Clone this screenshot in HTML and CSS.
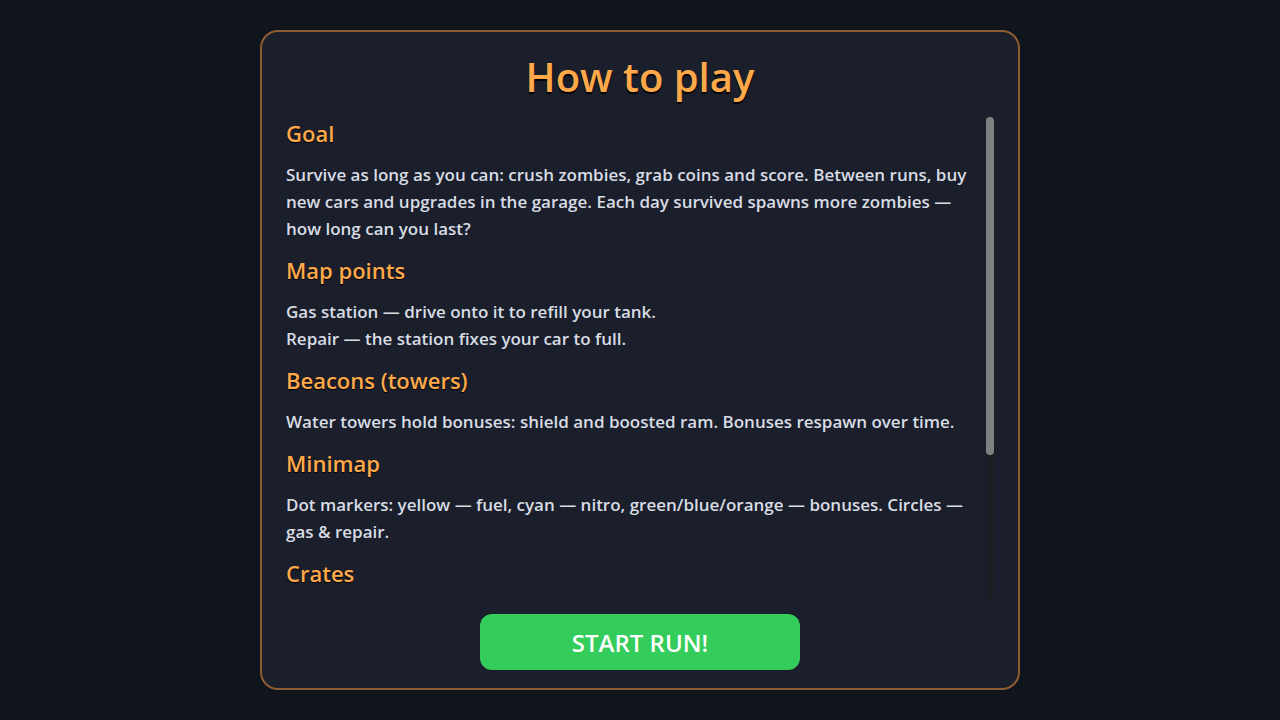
FILE: index.html
```html
<!DOCTYPE html>
<html lang="en">
<head>
<meta charset="utf-8">
<title>How to play</title>
<link rel="stylesheet" href="styles.css">
</head>
<body>
<div class="screen">
  <div class="panel">
    <h1 class="title">How to play</h1>
    <div class="body">
      <div class="scroll">
        <h2 class="heading">Goal</h2>
        <p class="text">Survive as long as you can: crush zombies, grab coins and score. Between runs, buy new cars and upgrades in the garage. Each day survived spawns more zombies — how long can you last?</p>
        <h2 class="heading">Map points</h2>
        <p class="text">Gas station — drive onto it to refill your tank.<br>Repair — the station fixes your car to full.</p>
        <h2 class="heading">Beacons (towers)</h2>
        <p class="text">Water towers hold bonuses: shield and boosted ram. Bonuses respawn over time.</p>
        <h2 class="heading">Minimap</h2>
        <p class="text">Dot markers: yellow — fuel, cyan — nitro, green/blue/orange — bonuses. Circles — gas &amp; repair.</p>
        <h2 class="heading">Crates</h2>
      </div>
      <div class="track"><div class="thumb"></div></div>
    </div>
    <div class="actions">
      <button class="start">START RUN!</button>
    </div>
  </div>
</div>
</body>
</html>
```
FILE: styles.css
```css
html, body {
  margin: 0;
  padding: 0;
  height: 100%;
  background: #10141c;
  font-family: "Open Sans", "Noto Sans", sans-serif;
}
.screen {
  height: 720px;
  display: flex;
  align-items: center;
  justify-content: center;
}
.panel {
  box-sizing: border-box;
  width: 760px;
  height: 660px;
  background: #1a1f2b;
  border: 2px solid #8a5c30;
  border-radius: 18px;
  padding: 18px 24px 18px 24px;
  display: flex;
  flex-direction: column;
}
.title {
  margin: 0 0 13px 0;
  text-align: center;
  font-size: 40px;
  font-weight: 600;
  line-height: 54px;
  color: #ffa94a;
  text-shadow: 0 2px 1px #000;
}
.body {
  flex: 1;
  min-height: 0;
  display: flex;
  gap: 12px;
}
.scroll {
  flex: 1;
  min-width: 0;
  overflow: hidden;
}
.track {
  width: 8px;
  flex: none;
  background: #1d1e23;
  border-radius: 4px;
  margin-bottom: 2px;
}
.thumb {
  height: 338px;
  background: #7f8083;
  border-radius: 4px;
}
.heading {
  margin: 0 0 12px 0;
  font-size: 22px;
  font-weight: 600;
  line-height: 32px;
  color: #ffa94a;
  text-shadow: 0 1px 1px #000;
}
.text {
  margin: 0 0 12px 0;
  font-size: 17px;
  font-weight: 600;
  line-height: 27px;
  color: #d8dce4;
}
.actions {
  display: flex;
  justify-content: center;
  padding-top: 12px;
}
.start {
  width: 320px;
  height: 56px;
  border: none;
  border-radius: 12px;
  background: #34cc5a;
  color: #ffffff;
  font-family: "Open Sans", "Noto Sans", sans-serif;
  font-size: 24px;
  font-weight: 600;
  cursor: pointer;
}
```
